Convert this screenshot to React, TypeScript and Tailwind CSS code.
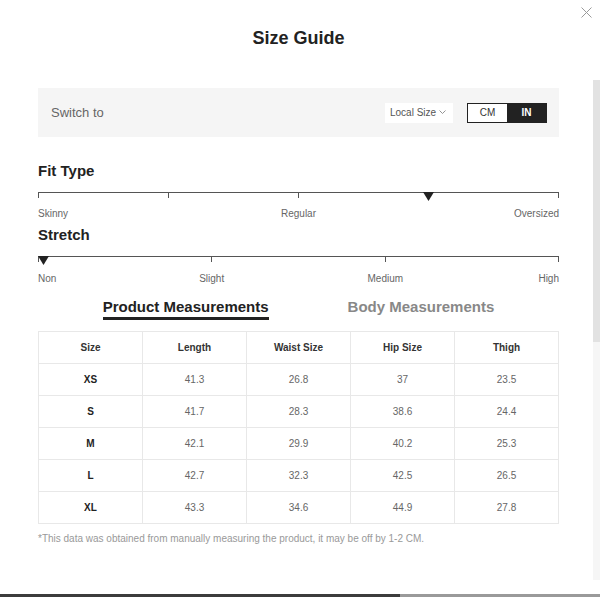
import React from 'react'

const rows = [
  { size: 'XS', length: '41.3', waist: '26.8', hip: '37', thigh: '23.5' },
  { size: 'S', length: '41.7', waist: '28.3', hip: '38.6', thigh: '24.4' },
  { size: 'M', length: '42.1', waist: '29.9', hip: '40.2', thigh: '25.3' },
  { size: 'L', length: '42.7', waist: '32.3', hip: '42.5', thigh: '26.5' },
  { size: 'XL', length: '43.3', waist: '34.6', hip: '44.9', thigh: '27.8' },
]

function Marker({ className }: { className: string }) {
  return (
    <svg className={`absolute top-[-1px] ${className}`} width="11" height="9" viewBox="0 0 11 9">
      <path d="M0 0 L11 0 L5.5 9 Z" fill="#222" />
    </svg>
  )
}

function Scale({ ticks, children }: { ticks: number; children?: React.ReactNode }) {
  return (
    <div className="relative mt-[12px] h-[6px] border-t border-[#555] flex justify-between">
      {Array.from({ length: ticks }).map((_, i) => (
        <span key={i} className="w-px h-[5px] bg-[#555]" />
      ))}
      {children}
    </div>
  )
}

export default function App() {
  return (
    <div
      className="relative w-[600px] h-[600px] bg-white overflow-hidden text-[#222]"
      style={{ fontFamily: '"Liberation Sans", Arial, sans-serif' }}
    >
      {/* close */}
      <svg className="absolute left-[581px] top-[7px]" width="11" height="11" viewBox="0 0 11 11">
        <path d="M0.5 0.5 L10.5 10.5 M10.5 0.5 L0.5 10.5" stroke="#9a9a9a" strokeWidth="1" />
      </svg>

      {/* scrollbar */}
      <div className="absolute left-[593px] top-[80px] w-[7px] h-[500px] bg-[#f6f6f6]">
        <div className="w-full h-[262px] bg-[#e2e2e2]" />
      </div>

      <div className="px-[38px] w-[597px]">
        <h1 className="pt-[27px] text-center text-[18px] leading-[22px] font-bold">Size Guide</h1>

        <div className="mt-[39px] h-[49px] bg-[#f5f5f5] flex items-center justify-between pl-[13px] pr-[12px]">
          <span className="text-[13px] text-[#666]">Switch to</span>
          <div className="flex items-center gap-[14px]">
            <div className="w-[68px] h-[20px] bg-white flex items-center pl-[5px] gap-[3px] text-[10px] text-[#555]">
              Local Size
              <svg width="7" height="5" viewBox="0 0 7 5">
                <path d="M0.5 0.5 L3.5 3.5 L6.5 0.5" stroke="#888" fill="none" strokeWidth="0.9" />
              </svg>
            </div>
            <div className="flex h-[20px] w-[80px] border border-[#222] text-[10px]">
              <span className="flex-1 flex items-center justify-center bg-white text-[#333]">CM</span>
              <span className="flex-1 flex items-center justify-center bg-[#222] text-white font-bold">IN</span>
            </div>
          </div>
        </div>

        <h2 className="mt-[25px] text-[15px] leading-[18px] font-bold">Fit Type</h2>
        <Scale ticks={5}>
          <Marker className="left-[385px]" />
        </Scale>
        <div className="mt-[10px] grid grid-cols-4 text-[10px] leading-[12px] text-[#666]">
          <span>Skinny</span>
          <span className="col-span-2 text-center">Regular</span>
          <span className="text-right">Oversized</span>
        </div>

        <h2 className="mt-[6px] text-[15px] leading-[18px] font-bold">Stretch</h2>
        <Scale ticks={4}>
          <Marker className="left-0" />
        </Scale>
        <div className="mt-[11px] grid grid-cols-6 text-[10px] leading-[12px] text-[#666]">
          <span>Non</span>
          <span className="col-span-2 text-center">Slight</span>
          <span className="col-span-2 text-center">Medium</span>
          <span className="text-right">High</span>
        </div>

        <div className="mt-[13px] flex justify-center gap-[79px] text-[15px] leading-[18px] font-bold">
          <span className="border-b-[3px] border-[#222] pb-[1px]">Product Measurements</span>
          <span className="text-[#888]">Body Measurements</span>
        </div>

        <table className="mt-[11px] w-full table-fixed border-collapse text-[10px] text-center">
          <thead>
            <tr className="h-[32px]">
              {['Size', 'Length', 'Waist Size', 'Hip Size', 'Thigh'].map((h) => (
                <th key={h} className="border border-[#e8e8e8] font-bold text-[#333]">
                  {h}
                </th>
              ))}
            </tr>
          </thead>
          <tbody>
            {rows.map((r) => (
              <tr key={r.size} className="h-[32px]">
                <td className="border border-[#e8e8e8] font-bold text-[#222]">{r.size}</td>
                <td className="border border-[#e8e8e8] text-[#666]">{r.length}</td>
                <td className="border border-[#e8e8e8] text-[#666]">{r.waist}</td>
                <td className="border border-[#e8e8e8] text-[#666]">{r.hip}</td>
                <td className="border border-[#e8e8e8] text-[#666]">{r.thigh}</td>
              </tr>
            ))}
          </tbody>
        </table>

        <p className="mt-[9px] text-[10px] leading-[12px] text-[#999]">
          *This data was obtained from manually measuring the product, it may be off by 1-2 CM.
        </p>
      </div>

      {/* bottom edge */}
      <div className="absolute left-0 right-0 bottom-[3px] h-[3px] flex">
        <div className="w-[400px] bg-[#3c3c3c]" />
        <div className="flex-1 bg-[#9a9a9a]" />
      </div>
    </div>
  )
}
